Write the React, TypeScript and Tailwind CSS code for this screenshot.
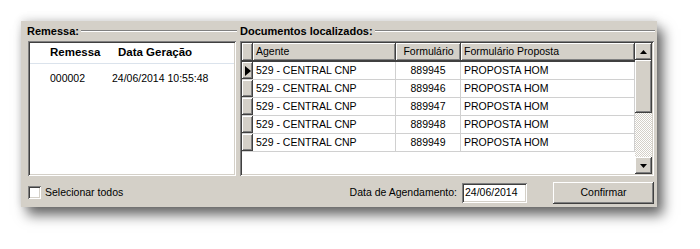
import React from "react";

const raised =
  "shadow-[inset_-1px_-1px_#404040,inset_1px_1px_#ffffff,inset_-2px_-2px_#808080,inset_2px_2px_#d4d0c8]";
const sunken =
  "shadow-[inset_1px_1px_#808080,inset_-1px_-1px_#ffffff,inset_2px_2px_#404040,inset_-2px_-2px_#d4d0c8]";

const rows = ["889945", "889946", "889947", "889948", "889949"];

function GroupLabel({ text }: { text: string }) {
  return (
    <div className="flex items-center h-[14px]">
      <span className="font-bold text-[11px] leading-[14px] pr-[2px]">{text}</span>
      <div className="flex-1 border-t border-t-[#808080] border-b border-b-white" />
    </div>
  );
}

function Arrow({ up }: { up?: boolean }) {
  return (
    <svg width="7" height="4" viewBox="0 0 7 4">
      {up ? <polygon points="3.5,0 7,4 0,4" fill="#000" /> : <polygon points="0,0 7,0 3.5,4" fill="#000" />}
    </svg>
  );
}

export default function App() {
  return (
    <div className="w-[700px] h-[249px] bg-white pt-[21px] pl-[21px] text-[10.5px] text-black font-['Liberation_Sans',Arial,sans-serif]">
      <div className="w-[636px] h-[186px] bg-[#d4d0c8] shadow-[6px_8px_12px_rgba(0,0,0,0.6),0_-2px_8px_rgba(0,0,0,0.12)] flex flex-col pl-[6px] pt-[3px]">
        {/* GROUPS */}
        <div className="flex gap-[3px]">
          <div className="w-[210px] flex flex-col">
            <GroupLabel text="Remessa:" />
            <div className={`ml-px mt-[3px] w-[208px] h-[135px] bg-white ${sunken} p-[2px]`}>
              <div className="flex h-[21px] items-center text-[11.5px] font-bold border-b border-b-[#dbe3ec]">
                <span className="ml-[20px] w-[68px]">Remessa</span>
                <span>Data Geração</span>
              </div>
              <div className="flex h-[28px] items-center pt-[1px]">
                <span className="ml-[20px] w-[62px]">000002</span>
                <span>24/06/2014 10:55:48</span>
              </div>
            </div>
          </div>

          <div className="w-[415px] flex flex-col">
            <GroupLabel text="Documentos localizados:" />
            <div className={`mt-[3px] w-[414px] h-[135px] bg-white ${sunken} p-[2px] flex`}>
              <div className="w-[393px] flex flex-col">
                <div className="flex h-[19px] border-b border-b-[#404040]">
                  <div className={`w-[11px] bg-[#d4d0c8] ${raised}`} />
                  <div className={`w-[143px] bg-[#d4d0c8] ${raised} flex items-center pl-[3px]`}>Agente</div>
                  <div className={`w-[65px] bg-[#d4d0c8] ${raised} flex items-center justify-center`}>Formulário</div>
                  <div className={`w-[174px] bg-[#d4d0c8] ${raised} flex items-center pl-[3px]`}>Formulário Proposta</div>
                </div>
                {rows.map((n, i) => (
                  <div key={n} className="flex h-[18px] border-b border-b-[#d0d0d0]">
                    <div className={`w-[11px] bg-[#d4d0c8] ${raised} flex items-center justify-center`}>
                      {i === 0 && (
                        <svg width="6" height="10" viewBox="0 0 6 10">
                          <polygon points="0,0 6,5 0,10" fill="#000" />
                        </svg>
                      )}
                    </div>
                    <div className="w-[143px] flex items-center pl-[3px] border-r border-r-[#d0d0d0]">529 - CENTRAL CNP</div>
                    <div className="w-[65px] flex items-center justify-center border-r border-r-[#d0d0d0]">{n}</div>
                    <div className="w-[174px] flex items-center pl-[3px] border-r border-r-[#d0d0d0]">PROPOSTA HOM</div>
                  </div>
                ))}
              </div>
              <div className="w-[17px] flex flex-col">
                <div className={`h-[17px] bg-[#d4d0c8] ${raised} flex items-center justify-center`}>
                  <Arrow up />
                </div>
                <div className={`h-[53px] bg-[#d4d0c8] ${raised}`} />
                <div className="flex-1 bg-[repeating-conic-gradient(#ffffff_0%_25%,#d4d0c8_0%_50%)] bg-[length:2px_2px]" />
                <div className={`h-[17px] bg-[#d4d0c8] ${raised} flex items-center justify-center`}>
                  <Arrow />
                </div>
              </div>
            </div>
          </div>
        </div>

        {/* BOTTOM BAR */}
        <div className="flex items-center mt-[5px] h-[23px]">
          <div className={`ml-px w-[13px] h-[13px] bg-white ${sunken}`} />
          <span className="ml-[4px]">Selecionar todos</span>
          <span className="ml-auto">Data de Agendamento:</span>
          <div className={`ml-[5px] w-[65px] h-[20px] bg-white ${sunken} flex items-center pl-[3px]`}>24/06/2014</div>
          <button className={`ml-[26px] mr-[3px] w-[101px] h-[22px] bg-[#d4d0c8] ${raised} flex items-center justify-center`}>
            Confirmar
          </button>
        </div>
      </div>
    </div>
  );
}
